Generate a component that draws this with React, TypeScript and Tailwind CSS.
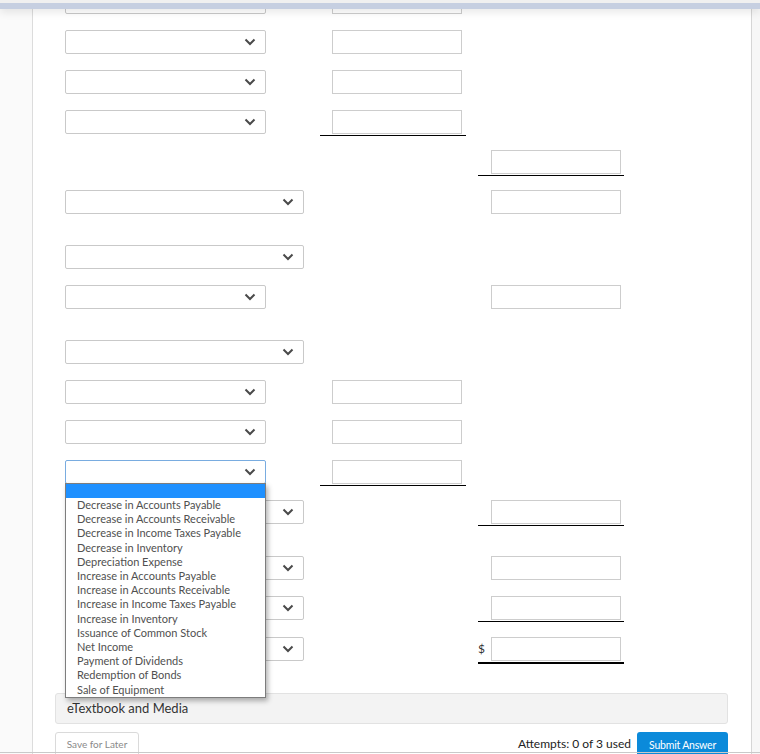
import React from 'react';

type Col = 'none' | 'input' | 'line' | 'dollar';

interface RowSpec {
  mt: string;
  select: 'narrow' | 'wide' | 'none';
  mid: Col;
  right: Col;
  focused?: boolean;
}

const rows: RowSpec[] = [
  { mt: 'mt-[-10px]', select: 'narrow', mid: 'input', right: 'none' },
  { mt: 'mt-[16px]', select: 'narrow', mid: 'input', right: 'none' },
  { mt: 'mt-[16px]', select: 'narrow', mid: 'input', right: 'none' },
  { mt: 'mt-[16px]', select: 'narrow', mid: 'line', right: 'none' },
  { mt: 'mt-[16px]', select: 'none', mid: 'none', right: 'line' },
  { mt: 'mt-[16px]', select: 'wide', mid: 'none', right: 'input' },
  { mt: 'mt-[31px]', select: 'wide', mid: 'none', right: 'none' },
  { mt: 'mt-[16px]', select: 'narrow', mid: 'none', right: 'input' },
  { mt: 'mt-[31px]', select: 'wide', mid: 'none', right: 'none' },
  { mt: 'mt-[16px]', select: 'narrow', mid: 'input', right: 'none' },
  { mt: 'mt-[16px]', select: 'narrow', mid: 'input', right: 'none' },
  { mt: 'mt-[16px]', select: 'narrow', mid: 'line', right: 'none', focused: true },
  { mt: 'mt-[16px]', select: 'wide', mid: 'none', right: 'line' },
  { mt: 'mt-[32px]', select: 'wide', mid: 'none', right: 'input' },
  { mt: 'mt-[16px]', select: 'wide', mid: 'none', right: 'line' },
  { mt: 'mt-[17px]', select: 'wide', mid: 'none', right: 'dollar' },
];

const options = [
  'Decrease in Accounts Payable',
  'Decrease in Accounts Receivable',
  'Decrease in Income Taxes Payable',
  'Decrease in Inventory',
  'Depreciation Expense',
  'Increase in Accounts Payable',
  'Increase in Accounts Receivable',
  'Increase in Income Taxes Payable',
  'Increase in Inventory',
  'Issuance of Common Stock',
  'Net Income',
  'Payment of Dividends',
  'Redemption of Bonds',
  'Sale of Equipment',
];

function Chevron() {
  return (
    <svg width="12" height="8" viewBox="0 0 12 8" className="shrink-0">
      <path d="M1.5 1.5 L6 6 L10.5 1.5" fill="none" stroke="#4a4a4a" strokeWidth="2" />
    </svg>
  );
}

function Select({ wide, focused }: { wide: boolean; focused?: boolean }) {
  return (
    <div
      className={
        'flex h-[24px] items-center justify-end rounded-[2px] border bg-white pr-[9px] ' +
        (wide ? 'w-[239px] ' : 'w-[201px] ') +
        (focused ? 'border-[#79ace0]' : 'border-[#c9c9c9]')
      }
    >
      <Chevron />
    </div>
  );
}

function Input() {
  return <div className="h-[24px] w-[130px] border border-[#cdcdcd] bg-white" />;
}

function Cell({ kind, pl }: { kind: Col; pl: string }) {
  if (kind === 'none') return null;
  if (kind === 'input')
    return (
      <div className={'w-[146px] ' + pl}>
        <Input />
      </div>
    );
  if (kind === 'line')
    return (
      <div className={'w-[146px] border-b border-black pb-[1px] ' + pl}>
        <Input />
      </div>
    );
  return (
    <div className="flex w-[146px] items-center border-b-2 border-black pb-[1px]">
      <span className="w-[13px] text-[12px] text-[#333]">$</span>
      <Input />
    </div>
  );
}

function Dropdown() {
  return (
    <div className="absolute left-0 top-[23px] z-10 w-[201px] border border-[#7d7d7d] bg-white shadow-[2px_3px_5px_rgba(0,0,0,0.3)]">
      <div className="h-[14px] bg-[#1e90ff]" />
      <ul>
        {options.map((o) => (
          <li key={o} className="pl-[11px] text-[11px] leading-[14.2px] text-[#505050]">
            {o}
          </li>
        ))}
      </ul>
    </div>
  );
}

export default function App() {
  return (
    <div className="relative h-[754px] w-full overflow-hidden bg-[#f8f8f8] font-['Lato','Noto_Sans',sans-serif]">
      {/* top bar */}
      <div className="absolute inset-x-0 top-0 z-20 shadow-[0_3px_8px_rgba(0,0,0,0.10)]">
        <div className="h-[3px] bg-[#f0f0f0]" />
        <div className="h-[6px] bg-[#c6cfe1]" />
      </div>

      <div className="flex h-full">
        <div className="w-[33px] shrink-0 border-r border-[#dcdcdc] bg-[#fafafa]" />
        <div className="w-[719px] shrink-0 border-r border-[#d6d6d6] bg-white">
          {rows.map((r, i) => (
            <div key={i} className={'flex h-[24px] pl-[32px] ' + r.mt}>
              <div className="relative w-[255px] shrink-0">
                {r.select !== 'none' && <Select wide={r.select === 'wide'} focused={r.focused} />}
                {r.focused && <Dropdown />}
              </div>
              <div className="w-[158px] shrink-0">
                <Cell kind={r.mid} pl="pl-[12px]" />
              </div>
              <div className="w-[146px] shrink-0">
                <Cell kind={r.right} pl="pl-[13px]" />
              </div>
            </div>
          ))}

          <div className="ml-[22px] mt-[32px] flex h-[31px] w-[673px] items-center rounded-[3px] border border-[#e2e2e2] bg-[#f3f3f3] pl-[11px] text-[13px] text-[#333]">
            eTextbook and Media
          </div>

          <div className="ml-[22px] mt-[8px] flex w-[673px] items-start justify-between">
            <div className="flex h-[24px] w-[84px] items-center justify-center rounded-t-[3px] border border-[#dadada] text-[10px] text-[#8a8a8a]">
              Save for Later
            </div>
            <div className="flex items-start">
              <span className="mr-[6px] mt-[4px] text-[12px] leading-[16px] text-[#222]">Attempts: 0 of 3 used</span>
              <div className="flex h-[24px] w-[91px] items-center justify-center rounded-t-[3px] bg-[#0b8ada] pt-[3px] text-[10.5px] tracking-[-0.2px] text-white">
                Submit Answer
              </div>
            </div>
          </div>
        </div>
        <div className="flex-1 bg-[#f7f7f7]" />
      </div>

      {/* bottom edge */}
      <div className="absolute inset-x-0 bottom-[1px] z-20 h-px bg-[#c9c9c9]" />
    </div>
  );
}
